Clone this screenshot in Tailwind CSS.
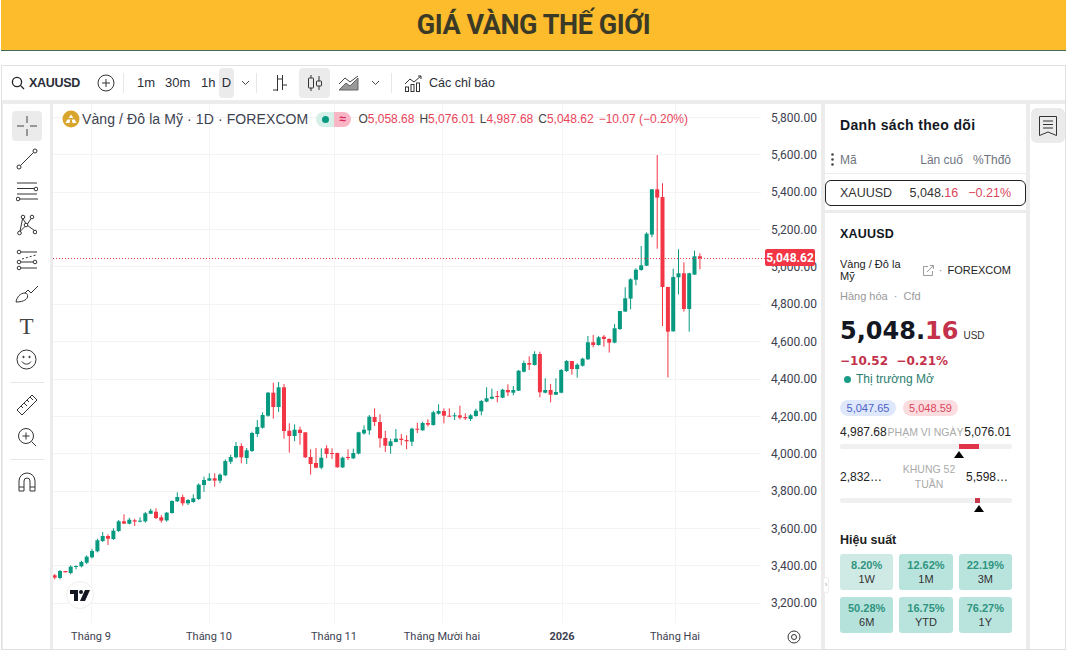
<!DOCTYPE html>
<html lang="vi">
<head>
  <meta charset="UTF-8" />
  <title>Giá vàng thế giới</title>
  <script src="https://cdn.jsdelivr.net/npm/@tailwindcss/browser@4"></script>
</head>
<body class="bg-white h-[651px] w-[1068px] overflow-hidden flex flex-col font-['Liberation_Sans',sans-serif]">

  <!-- Header -->
  <header class="ml-px mr-[2px] h-[51px] shrink-0 bg-[#fdbc2c] border-b border-[#3f6b5c] flex items-center justify-center">
    <h1 class="text-[27px] font-bold text-[#3b3a26] tracking-[-0.4px] font-['Roboto',sans-serif]">GIÁ VÀNG THẾ GIỚI</h1>
  </header>

  <!-- Widget -->
  <div class="mt-[14px] ml-px mr-[2px] h-[585px] border border-[#e0e0e0] bg-[#ececec] flex flex-col">

    <!-- Top toolbar -->
    <div class="h-[34px] shrink-0 bg-white flex items-center text-[#2a2e39] text-[13px] relative">
      <svg class="ml-[9px] w-[14px] h-[14px]" viewBox="0 0 14 14" fill="none" stroke="#222" stroke-width="1.3"><circle cx="6" cy="6" r="4.6"/><path d="M9.4 9.4 13 13"/></svg>
      <span class="ml-[4px] w-[60px] font-bold text-[12.5px] tracking-[-0.3px]">XAUUSD</span>
      <svg class="w-[18px] h-[18px] ml-[8px]" viewBox="0 0 18 18" fill="none" stroke="#333" stroke-width="1"><circle cx="9" cy="9" r="8"/><path d="M9 5v8M5 9h8"/></svg>
      <span class="w-px h-[20px] bg-[#e6e6e6] ml-[8px]"></span>
      <span class="ml-[13px] w-[28px]">1m</span>
      <span class="w-[36px]">30m</span>
      <span class="w-[18px]">1h</span>
      <span class="h-[30px] w-[15px] rounded bg-[#ebebeb] flex items-center justify-center">D</span>
      <svg class="ml-[7px] w-[9px] h-[6px]" viewBox="0 0 9 6" fill="none" stroke="#444"><path d="M1 1l3.5 3.5L8 1"/></svg>
      <span class="w-px h-[20px] bg-[#e6e6e6] ml-[6px]"></span>
      <svg class="ml-[15px] w-[16px] h-[18px]" viewBox="0 0 16 18" fill="none" stroke="#333"><path d="M5.5 1v16M1 16h4.5M5.5 5H10M10.5 1v15M10.5 11H15"/></svg>
      <span class="ml-[11px] w-[31px] h-[30px] rounded bg-[#ebebeb] flex items-center justify-center">
        <svg class="w-[16px] h-[18px]" viewBox="0 0 16 18" fill="none" stroke="#333"><path d="M4 1v3M4 14v3M12 2v5M12 12v4"/><rect x="1.5" y="4" width="5" height="10" rx=".5"/><rect x="9.5" y="7" width="5" height="5" rx=".5"/></svg>
      </span>
      <svg class="ml-[8px] w-[21px] h-[16px]" viewBox="0 0 21 16" fill="none" stroke="#444"><path d="M1 15 8 8l4 3 8-8v12z" fill="#999" stroke="#666"/><path d="M1 9l6-6 5 4 8-6"/></svg>
      <svg class="ml-[12px] w-[9px] h-[6px]" viewBox="0 0 9 6" fill="none" stroke="#444"><path d="M1 1l3.5 3.5L8 1"/></svg>
      <span class="w-px h-[20px] bg-[#e6e6e6] ml-[11px]"></span>
      <svg class="ml-[12px] w-[18px] h-[17px]" viewBox="0 0 18 17" fill="none" stroke="#333"><path d="M1 9l5-5 4 3 7-6M14 1h3v3"/><rect x="1.5" y="12" width="3" height="4.5"/><rect x="7" y="9.5" width="3" height="7"/><rect x="12.5" y="8" width="3" height="8.5"/></svg>
      <span class="ml-[7px] text-[12.5px]">Các chỉ báo</span>
    </div>

    <!-- Main row -->
    <div class="mt-[4px] flex-1 flex min-h-0">

      <!-- Drawing tools -->
      <aside class="ml-[1px] w-[47px] shrink-0 bg-white flex flex-col items-center pt-[7px] text-[#333]">
        <span class="w-[30px] h-[30px] rounded bg-[#ebebeb] flex items-center justify-center">
          <svg class="w-[22px] h-[22px]" viewBox="0 0 22 22" fill="none" stroke="#444"><path d="M11 1v7M11 14v7M1 11h7M14 11h7"/></svg>
        </span>
        <svg class="mt-[7px] w-[22px] h-[22px]" viewBox="0 0 22 22" fill="none" stroke="#333"><circle cx="3" cy="19" r="2"/><circle cx="19" cy="3" r="2"/><path d="M4.5 17.5l13-13"/></svg>
        <svg class="mt-[12px] w-[22px] h-[20px]" viewBox="0 0 22 20" fill="none" stroke="#333"><path d="M1 1h20M1 6.500h18M1 12h20M4 17h18"/><circle cx="20" cy="7" r="1.800" fill="#fff"/><circle cx="2" cy="17" r="1.800" fill="#fff"/></svg>
        <svg class="mt-[12px] w-[20px] h-[22px]" viewBox="0 0 20 22" fill="none" stroke="#333"><circle cx="6" cy="3" r="1.800"/><circle cx="15" cy="3" r="1.800"/><circle cx="2.500" cy="19" r="1.800"/><circle cx="18" cy="18" r="1.800"/><circle cx="9" cy="11" r="1.800"/><path d="M6 5l3 4.500M14 4.500 10.500 10M8 12.500 3 17.500M10.500 11.500l7 5M5.500 5 3 17"/></svg>
        <svg class="mt-[13px] w-[22px] h-[22px]" viewBox="0 0 22 22" fill="none" stroke="#333"><circle cx="3" cy="3" r="1.800"/><circle cx="3" cy="13" r="1.800"/><circle cx="3" cy="19" r="1.800"/><circle cx="19" cy="13" r="1.800"/><path d="M5 3h16M5 13h12M5 19h16"/><path d="M6 10 20 6" stroke-dasharray="2 2"/></svg>
        <svg class="mt-[13px] w-[24px] h-[20px]" viewBox="0 0 24 20" fill="none" stroke="#333"><path d="M1 18c1-5 4-9 9-9 2 0 3 2 2.500 4-1 3.500-6 5-11.500 5zM10 9l3-3M13 6l3 3 7-7"/></svg>
        <span class="mt-[12px] text-[23px] leading-[22px] font-['Liberation_Serif',serif] text-[#444]">T</span>
        <svg class="mt-[11px] w-[21px] h-[21px]" viewBox="0 0 21 21" fill="none" stroke="#333"><circle cx="10.500" cy="10.500" r="9.500"/><circle cx="7.500" cy="8" r=".7" fill="#333"/><circle cx="13.500" cy="8" r=".7" fill="#333"/><path d="M6 12.500c2 3.500 7 3.500 9 0"/></svg>
        <span class="mt-[12px] w-[34px] h-px bg-[#e6e6e6]"></span>
        <svg class="mt-[11px] w-[22px] h-[22px]" viewBox="0 0 22 22" fill="none" stroke="#333"><path d="M1 16 16 1l5 5L6 21zM5 12l2 2M8 9l3 3M11 6l2 2M14 3l3 3"/></svg>
        <svg class="mt-[11px] w-[20px] h-[20px]" viewBox="0 0 20 20" fill="none" stroke="#333"><circle cx="9" cy="9" r="7.500"/><path d="M14.500 14.500 19 19M9 5.500v7M5.500 9h7"/></svg>
        <span class="mt-[12px] w-[34px] h-px bg-[#e6e6e6]"></span>
        <svg class="mt-[12px] w-[18px] h-[20px]" viewBox="0 0 18 20" fill="none" stroke="#333"><path d="M1 19V9a8 8 0 0 1 16 0v10h-5V9a3 3 0 0 0-6 0v10zM1 15h5M12 15h5"/></svg>
      </aside>

      <!-- Chart -->
      <main class="ml-[3px] w-[768px] shrink-0 bg-white relative">
        <svg id="chart" class="block" width="768" height="545" viewBox="52 104 768 545" font-family="Roboto, sans-serif"></svg>

        <!-- Legend -->
        <div class="absolute left-[9px] top-[6px] flex items-center h-[18px] text-[12px] whitespace-nowrap">
          <svg class="w-[18px] h-[18px]" viewBox="0 0 18 18"><circle cx="9" cy="9" r="8.500" fill="#d9a52c"/><path d="M9 4.500l2.300 3.500H6.700zM3.500 13l1.800-3.500h3L7.500 13zM10.500 13l-.8-3.500h3l1.800 3.500z" fill="#fff"/></svg>
          <span class="ml-[2px] text-[14px] text-[#3d4250] tracking-[0.1px]">Vàng / Đô la Mỹ · 1D · FOREXCOM</span>
          <span class="ml-[8px] w-[18px] h-[15px] rounded-l-full bg-[#d5efe9] flex items-center justify-center"><span class="w-[7px] h-[7px] rounded-full bg-[#089981]"></span></span>
          <span class="w-[17px] h-[15px] rounded-r-full bg-[#f9b7c6] flex items-center justify-center text-[12px] leading-none font-bold text-[#e0245e]">≈</span>
          <span class="ml-[7px] text-[#444]">O<span class="text-[#e8445a]">5,058.68</span></span>
          <span class="ml-[5px] text-[#444]">H<span class="text-[#e8445a]">5,076.01</span></span>
          <span class="ml-[5px] text-[#444]">L<span class="text-[#e8445a]">4,987.68</span></span>
          <span class="ml-[5px] text-[#444]">C<span class="text-[#e8445a]">5,048.62</span></span>
          <span class="ml-[5px] text-[#e8445a]">−10.07 (−0.20%)</span>
        </div>

        <!-- Last price tag -->
        <span class="absolute left-[712px] top-[145px] w-[50px] h-[17px] rounded-[2px] bg-[#f23645] text-white text-[12px] font-bold flex items-center justify-center font-['Roboto',sans-serif]">5,048.62</span>

        <!-- TV logo -->
        <span class="absolute left-[13px] top-[477px] w-[28px] h-[28px] rounded-full bg-white border border-[#eeeeee] flex items-center justify-center">
          <svg class="w-[20px] h-[11px]" viewBox="0 0 20 11" fill="#131722"><path d="M0 0h8v11H4V4H0z"/><circle cx="11" cy="2" r="2"/><path d="M15 0h5l-5 11h-5z"/></svg>
        </span>

        <!-- Settings gear -->
        <svg class="absolute left-[734px] top-[526px] w-[14px] h-[14px]" viewBox="0 0 14 14" fill="none" stroke="#333"><circle cx="7" cy="7" r="6"/><circle cx="7" cy="7" r="2.500"/></svg>
      </main>

      <!-- Right panels -->
      <section class="ml-[4px] w-[201px] shrink-0 flex flex-col relative">
        <div class="h-[106px] shrink-0 bg-white flex flex-col">
          <h2 class="ml-[15px] mt-[13px] text-[14px] leading-[16px] font-bold text-[#131722] tracking-[0.35px]">Danh sách theo dõi</h2>
          <div class="mt-[18px] h-[17px] flex items-center text-[12px] text-[#70747f] border-b-0">
            <svg class="ml-[6px] w-[3px] h-[13px]" viewBox="0 0 3 13" fill="#444"><circle cx="1.500" cy="1.500" r="1.300"/><circle cx="1.500" cy="6.500" r="1.300"/><circle cx="1.500" cy="11.500" r="1.300"/></svg>
            <span class="ml-[6px]">Mã</span>
            <span class="ml-auto">Lần cuố</span>
            <span class="ml-[10px] mr-[15px]">%Thđô</span>
          </div>
          <div class="mt-[5px] h-px bg-[#ececec]"></div>
          <div class="mt-[6px] h-[26px] rounded-[6px] border border-[#222] flex items-center text-[12.5px] text-[#333] shrink-0">
            <span class="ml-[14px]">XAUUSD</span>
            <span class="ml-auto">5,048.<span class="text-[#d9455c]">16</span></span>
            <span class="ml-[10px] mr-[14px] text-[#d9455c]">−0.21%</span>
          </div>
        </div>
        <div class="mt-[3px] flex-1 bg-white px-[15px] relative">
          <h3 class="mt-[14px] text-[12.5px] leading-[14px] font-bold text-[#131722] tracking-[0.2px]">XAUUSD</h3>
          <div class="mt-[17px] flex items-center text-[11px] leading-[12px] text-[#222]">
            <span>Vàng / Đô la Mỹ</span>
            <svg class="ml-[5px] w-[11px] h-[11px]" viewBox="0 0 11 11" fill="none" stroke="#999"><path d="M5 1.500H.5v9h9V6M4 7l6-6M7 .5h3.500V4"/></svg>
            <span class="ml-[5px] text-[#888]">·</span>
            <span class="ml-[5px]">FOREXCOM</span>
          </div>
          <div class="mt-[8px] text-[11px] leading-[12px] text-[#999]">Hàng hóa &nbsp;·&nbsp; Cfd</div>
          <div class="mt-[14px] flex items-baseline font-['DejaVu_Sans',sans-serif] font-bold text-[24px] leading-[30px] text-[#131722]">5,048.<span class="text-[#c4314b]">16</span><span class="ml-[5px] text-[10px] font-normal font-['Liberation_Sans',sans-serif] text-[#333]">USD</span></div>
          <div class="mt-[3px] font-['DejaVu_Sans',sans-serif] font-bold text-[12px] leading-[14px] text-[#c4314b]">−10.52 &nbsp;−0.21%</div>
          <div class="mt-[4px] flex items-center text-[12px] leading-[14px] text-[#2b7d6f]"><span class="ml-[4px] w-[7px] h-[7px] rounded-full bg-[#1a9b85]"></span><span class="ml-[5px]">Thị trường Mở</span></div>
          <div class="mt-[14px] flex text-[11px] leading-[16px]">
            <span class="w-[56px] rounded-full bg-[#dfe7fb] text-[#4a63c8] text-center">5,047.65</span>
            <span class="ml-[7px] w-[55px] rounded-full bg-[#fbdde0] text-[#d9455c] text-center">5,048.59</span>
          </div>
          <div class="mt-[8px] flex items-center text-[12px] leading-[16px] text-[#222]">
            <span>4,987.68</span>
            <span class="ml-auto text-[10.5px] text-[#aaa]">PHẠM VI NGÀY</span>
            <span class="ml-auto">5,076.01</span>
          </div>
          <div class="mt-[4px] h-[5px] w-[172px] rounded-full bg-[#f0f0f0] relative">
            <span class="absolute left-[119px] top-0 h-[5px] w-[20px] bg-[#e03448]"></span>
          </div>
          <div class="ml-[114px] mt-[2px] w-0 h-0 border-x-[5px] border-x-transparent border-b-[7px] border-b-black"></div>
          <div class="mt-[4px] h-[30px] flex items-center text-[12px] text-[#222]">
            <span>2,832…</span>
            <span class="w-[60px] ml-[17px] text-center text-[10.5px] leading-[15px] text-[#aaa]">KHUNG 52 TUẦN</span>
            <span class="ml-auto mr-[3px]">5,598…</span>
          </div>
          <div class="mt-[6px] h-[5px] w-[172px] rounded-full bg-[#f0f0f0] relative">
            <span class="absolute left-[135px] top-0 h-[5px] w-[5px] bg-[#c93a4c]"></span>
          </div>
          <div class="ml-[134px] mt-[2px] w-0 h-0 border-x-[5px] border-x-transparent border-b-[7px] border-b-black"></div>
          <h3 class="mt-[21px] text-[12.5px] leading-[14px] font-bold text-[#222]">Hiệu suất</h3>
          <div class="mt-[7px] grid grid-cols-3 gap-x-[6px] gap-y-[7px] w-[172px] text-center text-[11px] leading-[14px] text-[#333]">
            <div class="h-[36px] rounded-[3px] bg-[#cfeae5] pt-[4px]"><div class="font-bold text-[#2f9480]">8.20%</div><div>1W</div></div>
            <div class="h-[36px] rounded-[3px] bg-[#b9e4dd] pt-[4px]"><div class="font-bold text-[#2f9480]">12.62%</div><div>1M</div></div>
            <div class="h-[36px] rounded-[3px] bg-[#b9e4dd] pt-[4px]"><div class="font-bold text-[#2f9480]">22.19%</div><div>3M</div></div>
            <div class="h-[36px] rounded-[3px] bg-[#b5e2db] pt-[4px]"><div class="font-bold text-[#2f9480]">50.28%</div><div>6M</div></div>
            <div class="h-[36px] rounded-[3px] bg-[#b9e4dd] pt-[4px]"><div class="font-bold text-[#2f9480]">16.75%</div><div>YTD</div></div>
            <div class="h-[36px] rounded-[3px] bg-[#b9e4dd] pt-[4px]"><div class="font-bold text-[#2f9480]">76.27%</div><div>1Y</div></div>
          </div>
          <span class="absolute -left-[2px] top-[364px] w-[6px] h-[16px] rounded-[2px] bg-white border border-[#eee] text-[8px] leading-[14px] text-[#aaa] text-center">›</span>
        </div>
      </section>

      <!-- Right rail -->
      <aside class="ml-[4px] flex-1 bg-white flex flex-col items-center pt-[4px]">
        <span class="w-[34px] h-[35px] rounded-[6px] bg-[#ebebeb] flex items-center justify-center">
          <svg class="w-[18px] h-[20px]" viewBox="0 0 18 20" fill="none" stroke="#333"><path d="M.5.500h17v19L9 16 .5 19.500zM4 5h10M4 8.500h10M4 12h10"/></svg>
        </span>
      </aside>
    </div>
  </div>

  <script>
    // candles as: up(1)/down(0) top bottom high low, read off the chart at 3x from segment y0
    const segs = [
      [440, `0 406 413 402 418,1 393 414 390 418,0 393 397 393 397,1 380 399 376 403,1 378 380 376 388,1 366 379 362 382,1 350 368 346 372,1 333 352 326 355,1 301 334 296 337,1 288 303 276 306,0 288 296 283 315,1 272 297 265 300,1 244 273 240 276,0 244 251 223 252,1 239 251 233 253,0 241 245 236 258,1 242 245 232 247,1 220 244 216 248,1 212 221 206 222,0 215 234 205 237,0 232 242 225 248,1 218 241 216 245,1 183 219 181 221,1 171 184 157 186,0 171 190 164 197,1 180 190 177 195,1 175 186 163 188,1 134 177 130 180,1 120 135 110 155,1 115 122 100 123,0 115 122 100 140,1 104 122 100 130,1 63 106 58 108,1 51 65 44 72,1 18 52 6 55,0 18 52 10 70`],
      [360, `1 271 294 264 312,1 219 273 215 276,1 201 222 180 231,1 165 203 157 206,1 98 167 96 170,0 98 141 68 176,1 82 141 66 156,0 82 213 72 236,0 212 228 190 278,1 209 228 193 244,0 209 219 200 254,0 217 292 217 294,0 291 312 268 344,0 309 323 264 325,1 293 323 265 328,0 265 282 256 295,0 279 282 265 297,0 279 322 278 323,1 293 322 290 324,0 291 294 268 300,1 279 295 266 297,1 217 281 215 283,1 209 220 196 224,1 170 211 165 224,0 171 186 145 198,0 186 235 163 263,0 234 257 212 276,1 244 258 236 281,1 236 246 207 247,0 236 240 222 256,0 240 244 226 268,1 206 245 203 258,0 206 209 188 219,1 189 211 185 212,0 189 194 178 200,1 157 195 152 197`],
      [310, `1 303 311 283 314,0 303 317 295 340,0 317 319 295 320,1 316 318 308 330,0 316 323 287 328,0 321 325 310 330,1 316 327 312 333,1 302 318 296 320,1 273 304 270 316,1 265 275 232 277,1 260 266 236 268,0 258 260 243 277,1 239 263 236 264,0 240 247 223 258,1 240 248 228 256,1 182 242 180 243,1 159 185 152 187,0 159 164 139 180,1 132 165 124 167,0 132 247 125 262,1 240 248 205 250,0 240 254 222 277,1 246 254 205 255,1 180 248 177 250,1 153 183 150 186,0 153 177 153 194,1 164 177 160 203,1 146 167 143 170,1 97 148 78 150,0 97 105 75 112,1 82 105 78 107`],
      [140, `0 590 597 585 620,0 597 608 595 638,1 565 608 552 610,1 513 567 513 570,1 475 515 442 515,1 418 476 415 508,1 389 419 385 436,1 376 390 318 392,1 281 377 277 378,1 148 284 147 292,0 148 173 45 326,0 171 441 130 558,0 441 575 440 712,1 411 574 386 575,1 400 412 328 463,0 400 507 367 515,1 400 507 398 575,1 349 404 332 405,0 349 355 340 388`],
    ];

    const prices = [5800, 5600, 5400, 5200, 5000, 4800, 4600, 4400, 4200, 4000, 3800, 3600, 3400, 3200];
    const months = [['Tháng 9', 90], ['Tháng 10', 208], ['Tháng 11', 333], ['Tháng Mười hai', 441], ['2026', 561], ['Tháng Hai', 674]];
    const priceY = (p) => 117 + (5800 - p) * 0.18686;

    let out = '';
    months.forEach(([, x]) => { out += `<rect x="${x}" y="104" width="1" height="519" fill="#f5f5f5"/>`; });
    prices.forEach((p) => { out += `<rect x="52" y="${Math.round(priceY(p))}" width="708" height="1" fill="#f3f3f3"/>`; });

    let i = 0;
    segs.forEach(([y0, text]) => {
      text.split(',').forEach((row) => {
        const [up, top, bot, hi, lo] = row.split(' ').map(Number);
        const x = 53.7 + i * 5.332;
        const col = up ? '#089981' : '#f23645';
        const y = (v) => (y0 + v / 3).toFixed(1);
        out += `<rect x="${(x - 0.5).toFixed(1)}" y="${y(hi)}" width="1" height="${((lo - hi) / 3).toFixed(1)}" fill="${col}"/>`;
        out += `<rect x="${(x - 2).toFixed(1)}" y="${y(top)}" width="4" height="${Math.max((bot - top) / 3, 1).toFixed(1)}" fill="${col}"/>`;
        i++;
      });
    });

    out += `<line x1="52" x2="764" y1="258.5" y2="258.5" stroke="#f23645" stroke-dasharray="1 2"/>`;
    prices.forEach((p) => {
      out += `<text x="770" y="${(priceY(p) + 4.5).toFixed(1)}" font-size="12" fill="#3d4250">${p.toLocaleString('en-US')}.00</text>`;
    });
    months.forEach(([label, x]) => {
      const bold = label === '2026' ? ' font-weight="bold"' : '';
      out += `<text x="${x}" y="640" font-size="11" text-anchor="middle" fill="#3d4250"${bold}>${label}</text>`;
    });
    document.getElementById('chart').innerHTML = out;
  </script>
</body>
</html>
